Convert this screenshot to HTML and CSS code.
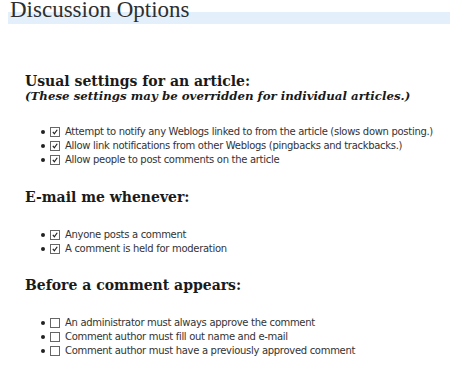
FILE: index.html
```html
<!DOCTYPE html>
<html lang="en">
<head>
    <meta charset="UTF-8">
    <title>Discussion Options</title>
    <link rel="stylesheet" href="styles.css">
</head>
<body>
  <div class="page">
    <h1 class="title">Discussion Options</h1>

    <!-- Article defaults -->
    <div class="section first">
      <h2>Usual settings for an article:
        <em>(These settings may be overridden for individual articles.)</em>
      </h2>
      <ul class="options">
        <li><span class="box on"><svg viewBox="0 0 10 10"><path d="M2.3 4.8 L4.2 7.2 L7.8 2.2"/></svg></span>Attempt to notify any Weblogs linked to from the article (slows down posting.)</li>
        <li><span class="box on"><svg viewBox="0 0 10 10"><path d="M2.3 4.8 L4.2 7.2 L7.8 2.2"/></svg></span>Allow link notifications from other Weblogs (pingbacks and trackbacks.)</li>
        <li><span class="box on"><svg viewBox="0 0 10 10"><path d="M2.3 4.8 L4.2 7.2 L7.8 2.2"/></svg></span>Allow people to post comments on the article</li>
      </ul>
    </div>

    <!-- Notifications -->
    <div class="section">
      <h2>E-mail me whenever:</h2>
      <ul class="options">
        <li><span class="box on"><svg viewBox="0 0 10 10"><path d="M2.3 4.8 L4.2 7.2 L7.8 2.2"/></svg></span>Anyone posts a comment</li>
        <li><span class="box on"><svg viewBox="0 0 10 10"><path d="M2.3 4.8 L4.2 7.2 L7.8 2.2"/></svg></span>A comment is held for moderation</li>
      </ul>
    </div>

    <!-- Moderation -->
    <div class="section">
      <h2>Before a comment appears:</h2>
      <ul class="options">
        <li><span class="box"></span>An administrator must always approve the comment</li>
        <li><span class="box"></span>Comment author must fill out name and e-mail</li>
        <li><span class="box"></span>Comment author must have a previously approved comment</li>
      </ul>
    </div>
  </div>
</body>
</html>
```

FILE: styles.css
```css
body {
    margin: 0;
    background-color: #fff;
    color: #333;
}

.page {
    padding: 0 0 0 8px;
}

.title {
    margin: 0;
    padding: 0 0 4px 2px;
    font-family: "Liberation Serif", serif;
    font-weight: normal;
    font-size: 23px;
    line-height: 20px;
    color: #2e2e2e;
    background: linear-gradient(transparent 12px, #e3f0fb 12px, #e3f0fb 24px, transparent 24px);
}

.section {
    padding-left: 17px;
}

h2 {
    margin: 22.5px 0 0 0;
    font-family: "DejaVu Serif", serif;
    font-size: 14px;
    line-height: 15px;
    color: #1a1a1a;
}

h2 em {
    display: block;
    font-size: 11.8px;
}

.first h2 {
    margin-top: 50px;
}

.options {
    margin: 23px 0 0 0;
    padding-left: 25px;
    list-style: none;
    font-family: "DejaVu Sans", sans-serif;
    font-size: 10px;
    letter-spacing: -0.3px;
    line-height: 14px;
    color: #333;
}

.first .options {
    margin-top: 21px;
}

.options li {
    position: relative;
    display: flex;
    align-items: center;
    white-space: nowrap;
}

.options li::before {
    content: "";
    position: absolute;
    left: -9px;
    top: 5px;
    width: 4px;
    height: 4px;
    border-radius: 50%;
    background: #222;
}

.box {
    display: inline-block;
    width: 8px;
    height: 8px;
    margin-right: 5px;
    border: 1px solid #666;
    background: #fff;
}

.box svg {
    display: block;
    width: 8px;
    height: 8px;
    fill: none;
    stroke: #222;
    stroke-width: 1.5;
}
```
